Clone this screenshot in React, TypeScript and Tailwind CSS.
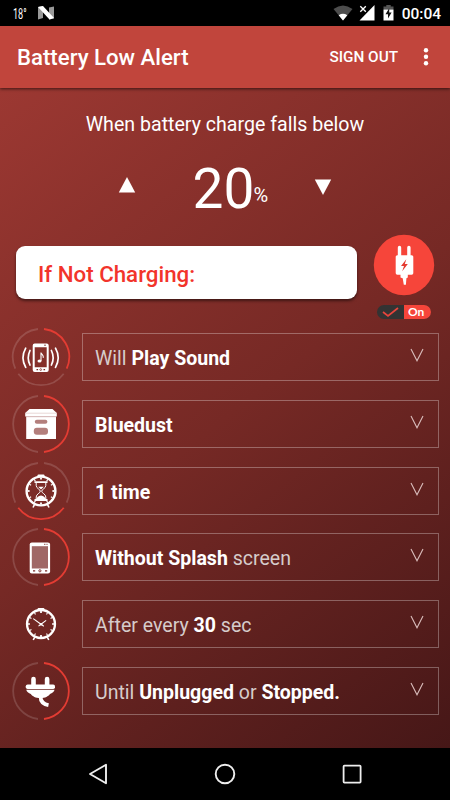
import { ReactNode } from "react";

type RingKind = "right" | "bottom" | "half" | "none";

interface Setting {
  id: string;
  ring: RingKind;
  icon: ReactNode;
  label: ReactNode;
}

function Ring({ kind }: { kind: RingKind }) {
  if (kind === "none") return null;
  const dim = "#ffffff26";
  const lit = "#e33c33";
  if (kind === "half") {
    return (
      <g fill="none" strokeWidth="1.8">
        <path d="M-3 -28A28.2 28.2 0 0 0 -3 28" stroke={dim} />
        <path d="M3 -28A28.2 28.2 0 0 1 3 28" stroke={lit} />
      </g>
    );
  }
  return (
    <g fill="none" strokeWidth="1.8">
      <path d="M-3 -28A28.2 28.2 0 0 0 -25.7 11.6" stroke={dim} />
      <path
        d="M3 -28A28.2 28.2 0 0 1 25.7 11.6"
        stroke={kind === "right" ? lit : dim}
      />
      <path
        d="M-22.7 16.7A28.2 28.2 0 0 0 22.7 16.7"
        stroke={kind === "bottom" ? lit : dim}
      />
    </g>
  );
}

const soundIcon = (
  <g>
    <path
      fillRule="evenodd"
      d="M-6.3 -13.5H5.7a2 2 0 0 1 2 2V13a2 2 0 0 1 -2 2H-6.3a2 2 0 0 1 -2 -2V-11.5a2 2 0 0 1 2 -2ZM-6.3 -9.8V10.3H5.7V-9.8Z"
      fill="#fff"
    />
    <path d="M3 -11.8H5" stroke="#7b2b28" strokeWidth="0.8" />
    <path d="M-4.5 12.6h1.6M2.5 12.6h1.6" stroke="#7b2b28" strokeWidth="1.2" />
    <circle cx="-0.3" cy="12.6" r="0.9" fill="none" stroke="#7b2b28" strokeWidth="0.7" />
    <ellipse cx="-1.5" cy="4" rx="2" ry="1.6" fill="#fff" />
    <path d="M0 4V-4.5C0.3 -2.5 3 -2 2.2 0.8" fill="none" stroke="#fff" strokeWidth="1.1" />
    <g fill="none" stroke="#fff" strokeWidth="1.7" strokeLinecap="round">
      <path d="M-11 -6.5Q-14.5 0.8 -11 8" />
      <path d="M-15.3 -8.8Q-20.7 0.8 -15.3 10.4" />
      <path d="M10.4 -6.5Q13.9 0.8 10.4 8" />
      <path d="M14.5 -8.8Q19.9 0.8 14.5 10.4" />
    </g>
  </g>
);

const boxIcon = (
  <g>
    <path d="M-11.5 -15H11.5L15.8 -11V-7.4H-15.8V-11Z" fill="#fff" />
    <path d="M-14.8 -7.4H15V15H-14.8Z" fill="#fff" />
    <path d="M-15.8 -10.8H15.8M-14.8 -7.2H15" stroke="#d9bcba" strokeWidth="0.6" />
    <rect x="-6.2" y="-4.3" width="12.6" height="4" rx="2" fill="#b37f7c" />
    <rect x="-7.2" y="3.8" width="14.2" height="7" rx="3" fill="#b37f7c" />
  </g>
);

const ticks = [0, 30, 60, 90, 120, 150, 180, 210, 240, 270, 300, 330];

const clockFace = (
  <g>
    <circle r="14.4" fill="none" stroke="#fff" strokeWidth="2.4" />
    <path d="M-3.5 -14.2V-15.6Q-3.5 -16.6 -2.5 -16.6H2.5Q3.5 -16.6 3.5 -15.6V-14.2Z" fill="#fff" />
    <path d="M-6.5 13.5L-8 16.5M6.5 13.5L8 16.5" stroke="#fff" strokeWidth="1.6" />
    {ticks.map((deg) => (
      <path
        key={deg}
        d="M0 -13.4V-11.4"
        stroke="#fff"
        strokeWidth={deg % 90 === 0 ? 1.8 : 1.1}
        transform={`rotate(${deg})`}
      />
    ))}
  </g>
);

const hourglassIcon = (
  <g>
    {clockFace}
    <g stroke="#fff" fill="none">
      <path d="M-6.5 -8.9H6.5M-6.5 9H6.5" strokeWidth="1.8" />
      <path
        d="M-4.8 -8.5V-5.5C-4.8 -2.5 -0.7 -1.8 -0.7 0.2S-4.8 3 -4.8 6V8.5M4.8 -8.5V-5.5C4.8 -2.5 0.7 -1.8 0.7 0.2S4.8 3 4.8 6V8.5"
        strokeWidth="1"
      />
    </g>
    <path d="M-2.8 -4.3H2.8L0 -1.5ZM-5 8.5Q-3.8 5 0 4.5Q3.8 5 5 8.5Z" fill="#fff" />
  </g>
);

const clockIcon = (
  <g transform="scale(0.97)">
    {clockFace}
    <path d="M-8 -5.6L0 0.3L5.3 -3.8M0 0.3L2.9 2.3M0 0.3L-2.6 2.2" fill="none" stroke="#fff" strokeWidth="1.1" />
    <circle cy="0.3" r="1.3" fill="#fff" />
  </g>
);

const tabletIcon = (
  <g>
    <rect x="-11.3" y="-14.6" width="20.4" height="31" rx="2.2" fill="#fff" />
    <rect x="-9.2" y="-10.8" width="16.2" height="22.3" fill="#a06866" />
    <path d="M3.2 -12.7h1.2M5.5 -12.7h1" stroke="#7b2b28" strokeWidth="1" />
    <path d="M-8 13.8h2.2M4 13.8h2.2" stroke="#7b2b28" strokeWidth="1.2" />
    <circle cx="-1.1" cy="13.8" r="1.1" fill="none" stroke="#7b2b28" strokeWidth="0.9" />
  </g>
);

const plugIcon = (
  <g>
    <path
      d="M-9.8 -5.5V-12a2.3 2.3 0 0 1 4.6 0V-5.5M3.8 -5.5V-12a2.3 2.3 0 0 1 4.6 0V-5.5"
      fill="#fff"
    />
    <rect x="-15.2" y="-6.5" width="29.2" height="4.6" rx="1.8" fill="#fff" />
    <path d="M-14.7 -1.2H13.5C13.5 0.6 11 2 9 3C7 5.5 4.5 7 -0.6 7S-8.2 5.5 -10.2 3C-12.2 2 -14.7 0.6 -14.7 -1.2Z" fill="#fff" />
    <path d="M-0.4 6C-0.4 11 3.5 13.4 7.5 14.2" fill="none" stroke="#fff" strokeWidth="3.8" />
  </g>
);

const settings: Setting[] = [
  { id: "action", ring: "right", icon: soundIcon, label: <>Will <b>Play Sound</b></> },
  { id: "tone", ring: "half", icon: boxIcon, label: <b>Bluedust</b> },
  { id: "repeat", ring: "bottom", icon: hourglassIcon, label: <b>1 time</b> },
  { id: "splash", ring: "half", icon: tabletIcon, label: <><b>Without Splash</b> screen</> },
  { id: "interval", ring: "none", icon: clockIcon, label: <>After every <b>30</b> sec</> },
  { id: "until", ring: "half", icon: plugIcon, label: <>Until <b>Unplugged</b> or <b>Stopped.</b></> },
];

function StatusBar() {
  return (
    <div className="flex h-[26px] items-center bg-black pt-[2px] pr-[9px] pl-[12.5px] text-white">
      <span className="inline-block w-[15px] origin-left scale-x-[0.65] text-[14px] leading-none whitespace-nowrap">
        18°
      </span>
      <svg className="-mt-[2px] ml-[10.5px]" width="16" height="14" viewBox="0 0 16 14">
        <path d="M0 1L5 0V12L0 13.5ZM11 1.5L16 0.5V12.5L11 13.5Z" fill="#999" />
        <path d="M0 1L5 0L16 12L11.5 13.5Z" fill="#fff" />
      </svg>
      <svg className="-mt-[2px] ml-auto" width="20" height="16" viewBox="0 0 20 16">
        <path d="M0.5 4Q10 -3 19.5 4L10 15.5Z" fill="#4d4d4d" />
        <path d="M5.7 10.2Q10 7.5 14.3 10.2L10 15.5Z" fill="#fff" />
      </svg>
      <svg className="-mt-[2px] ml-[6px]" width="16" height="16" viewBox="0 0 16 16">
        <path d="M15.5 0V15.5H0.5Z" fill="#fff" />
        <path d="M0 0H8V8H0Z" fill="#000" />
        <path d="M1.3 1.3L6.8 6.8M6.8 1.3L1.3 6.8" stroke="#fff" strokeWidth="1.3" />
      </svg>
      <svg className="-mt-[2px] ml-[8px]" width="11" height="16" viewBox="0 0 11 16">
        <path d="M3.3 0H7.7V1.5H10.5V4.5H0.5V1.5H3.3Z" fill="#555" />
        <path d="M0.5 4.5H10.5V15.5H0.5Z" fill="#fff" />
        <path d="M6.2 3.2L2.5 9.3H5V13.5L8.6 7.5H6.2Z" fill="#111" />
      </svg>
      <span className="ml-[8px] pt-px text-[15.5px] leading-none font-medium">00:04</span>
    </div>
  );
}

function AppBar() {
  return (
    <header className="relative flex h-[62px] items-center bg-[#c1453c] pt-[2px] pr-[19px] pl-[17px] text-white shadow-[0_1px_3px_rgba(0,0,0,0.6)]">
      <h1 className="text-[22.2px] font-medium whitespace-nowrap">Battery Low Alert</h1>
      <button className="-mt-px ml-auto text-[15.3px] font-medium whitespace-nowrap">SIGN OUT</button>
      <svg className="-mt-[2px] ml-[23px]" width="10" height="20" viewBox="0 0 10 20" fill="#fff">
        <circle cx="5" cy="3.3" r="2.2" />
        <circle cx="5" cy="9.8" r="2.2" />
        <circle cx="5" cy="16.3" r="2.2" />
      </svg>
    </header>
  );
}

function ChargeLevel() {
  return (
    <div className="flex h-[76px] items-center pl-[118px] text-white">
      <svg className="-mt-[8px]" width="18" height="16" viewBox="0 0 18 16">
        <path d="M9 0L17.2 15.5H0.8Z" fill="#fff" />
      </svg>
      <span className="ml-[56.5px] w-[61px] text-[55px] leading-none">20</span>
      <span className="mt-[12px] w-[16px] text-[20px] leading-none">%</span>
      <svg className="-mt-[4px] ml-[44.5px]" width="18" height="16" viewBox="0 0 18 16">
        <path d="M9 16L17.2 0.5H0.8Z" fill="#fff" />
      </svg>
    </div>
  );
}

function ChargingCondition() {
  return (
    <div className="flex h-[97px] pt-[6.5px] pl-[16px]">
      <div className="mt-[12px] flex h-[53px] w-[341px] items-center rounded-[9px] bg-white pt-[5px] pl-[22px] text-[22.3px] font-medium text-[#f2342b] shadow-[0_2px_3px_rgba(0,0,0,0.5)]">
        If Not Charging:
      </div>
      <div className="ml-[16px] flex w-[62px] flex-col items-center">
        <svg width="62" height="62" viewBox="-31 -31 62 62">
          <circle r="30.2" fill="#f6453a" />
          <path d="M-6.2 -9V-17.5a1.7 1.7 0 0 1 3.4 0V-9M3.2 -9V-17.5a1.7 1.7 0 0 1 3.4 0V-9" fill="#fff" />
          <rect x="-8.3" y="-9.8" width="17.6" height="19.5" rx="1.6" fill="#fff" />
          <path d="M-3.5 9H3.8V12.5L2.4 13.3L1.9 19.7H-0.2L-1.3 13.3L-3.5 12.5Z" fill="#fff" />
          <path d="M2.3 -5.7L-3 1H0L-1.8 6.2L3.8 -1H0.8Z" fill="#e53a30" />
        </svg>
        <div className="mt-[9px] flex h-[14px] w-[54px] overflow-hidden rounded-full bg-[#333]">
          <svg width="27" height="14" viewBox="0 0 27 14">
            <path d="M6 7L11 11L21 3" fill="none" stroke="#e8453c" strokeWidth="1.7" />
          </svg>
          <span className="flex flex-1 items-center bg-[#f6453a] pl-[4px] font-[Lato,sans-serif] text-[12px] leading-none font-bold text-white">
            On
          </span>
        </div>
      </div>
    </div>
  );
}

function SettingRow({ setting }: { setting: Setting }) {
  return (
    <div className="flex h-[66.7px] items-center pl-[11px]">
      <svg width="60" height="60" viewBox="-30 -30 60 60">
        <Ring kind={setting.ring} />
        {setting.icon}
      </svg>
      <button className="ml-[11px] flex h-[48px] w-[357px] items-center border border-white/30 pr-[14px] pl-[12px] text-left text-[19.55px] text-[#d6cccb] [&_b]:font-bold [&_b]:text-white">
        <span className="pt-[3px] whitespace-nowrap">{setting.label}</span>
        <svg className="-mt-[4px] ml-auto" width="14" height="14" viewBox="0 0 14 14">
          <path d="M1 1L7 12.8L13 1" fill="none" stroke="#d9bcbb" strokeWidth="1.1" />
        </svg>
      </button>
    </div>
  );
}

function NavBar() {
  return (
    <nav className="flex h-[52px] items-center justify-between bg-black pr-[88px] pl-[88px]">
      <svg width="20" height="22" viewBox="0 0 20 22">
        <path d="M18 1.8V20.2L2 11Z" fill="none" stroke="#eee" strokeWidth="1.9" strokeLinejoin="round" />
      </svg>
      <svg width="22" height="22" viewBox="0 0 22 22">
        <circle cx="11" cy="11" r="9.3" fill="none" stroke="#eee" strokeWidth="1.9" />
      </svg>
      <svg width="20" height="20" viewBox="0 0 20 20">
        <rect x="1.6" y="1.6" width="17" height="17" rx="0.8" fill="none" stroke="#eee" strokeWidth="1.8" />
      </svg>
    </nav>
  );
}

function App() {
  return (
    <div className="flex h-[800px] w-[450px] flex-col overflow-hidden bg-black font-[Roboto,sans-serif]">
      <StatusBar />
      <AppBar />
      <main className="flex-1 bg-linear-142 from-[#9c3832] via-[#762925] to-[#461717]">
        <p className="pt-[22px] text-center text-[19.6px] leading-[30px] text-white">
          When battery charge falls below
        </p>
        <div className="pt-[11px]">
          <ChargeLevel />
        </div>
        <ChargingCondition />
        {settings.map((setting) => (
          <SettingRow key={setting.id} setting={setting} />
        ))}
      </main>
      <NavBar />
    </div>
  );
}

export default App;
